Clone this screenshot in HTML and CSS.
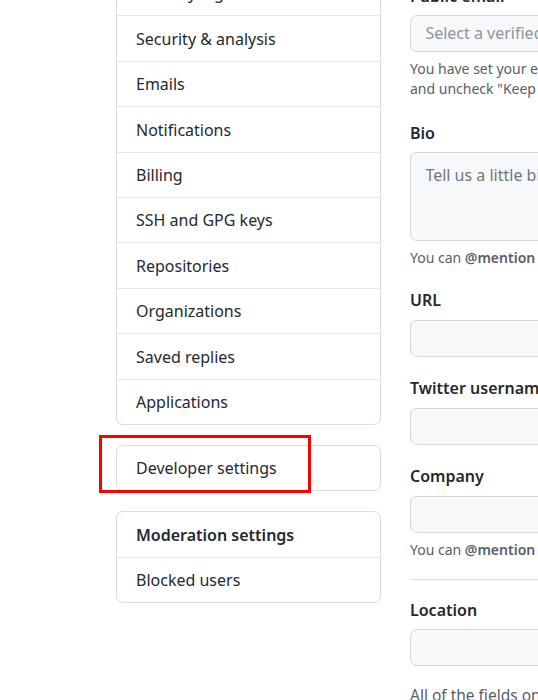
FILE: index.html
```html
<!DOCTYPE html>
<html lang="en">
<head>
<meta charset="utf-8">
<title>Settings</title>
<link rel="stylesheet" href="styles.css">
</head>
<body>
<div class="page">
  <nav class="sidebar">
    <div class="menu">
      <a class="menu-item" href="#">Security log</a>
      <a class="menu-item" href="#">Security &amp; analysis</a>
      <a class="menu-item" href="#">Emails</a>
      <a class="menu-item" href="#">Notifications</a>
      <a class="menu-item" href="#">Billing</a>
      <a class="menu-item" href="#">SSH and GPG keys</a>
      <a class="menu-item" href="#">Repositories</a>
      <a class="menu-item" href="#">Organizations</a>
      <a class="menu-item" href="#">Saved replies</a>
      <a class="menu-item" href="#">Applications</a>
    </div>
    <div class="menu menu-dev">
      <a class="menu-item" href="#">Developer settings</a>
      <span class="highlight"></span>
    </div>
    <div class="menu">
      <div class="menu-heading">Moderation settings</div>
      <a class="menu-item" href="#">Blocked users</a>
    </div>
  </nav>
  <main class="main">
    <div class="group group-first">
      <label class="label">Public email</label>
      <div class="input select"><span class="placeholder">Select a verified email to display</span></div>
      <p class="note">You have set your email address to private. To toggle email privacy, go to email settings<br>and uncheck "Keep my email address private."</p>
    </div>
    <div class="group">
      <label class="label">Bio</label>
      <div class="input textarea"><span class="placeholder">Tell us a little bit about yourself</span></div>
      <p class="note">You can <b>@mention</b> other users and organizations to link to them.</p>
    </div>
    <div class="group">
      <label class="label">URL</label>
      <div class="input"></div>
    </div>
    <div class="group">
      <label class="label">Twitter username</label>
      <div class="input"></div>
    </div>
    <div class="group">
      <label class="label">Company</label>
      <div class="input"></div>
      <p class="note">You can <b>@mention</b> your company's GitHub organization to link it.</p>
    </div>
    <hr class="divider">
    <div class="group">
      <label class="label">Location</label>
      <div class="input"></div>
    </div>
    <p class="note note-lg">All of the fields on this page are optional and can be deleted at any time.</p>
  </main>
</div>
</body>
</html>
```

FILE: styles.css
```css
html, body {
  margin: 0;
  padding: 0;
  background: #ffffff;
  overflow: hidden;
}
body {
  font-family: "Noto Sans", "Open Sans", sans-serif;
  color: #24292f;
  font-size: 16px;
  line-height: 25.2px;
}
.page {
  display: flex;
  align-items: flex-start;
  gap: 29px;
  padding-left: 116px;
  margin-top: -30px;
  width: 1000px;
}
.sidebar {
  width: 265px;
  flex: none;
  display: flex;
  flex-direction: column;
  gap: 20px;
}
.menu {
  border: 1px solid #d8dee4;
  border-radius: 7px;
  display: flex;
  flex-direction: column;
  position: relative;
}
.menu-item, .menu-heading {
  display: block;
  padding: 10.4px 19px 8.8px;
  color: #24292f;
  text-decoration: none;
  border-top: 1px solid #e4e8ec;
}
.menu > :first-child {
  border-top: none;
}
.menu-heading {
  font-weight: 600;
}
.highlight {
  position: absolute;
  left: -18px;
  top: -11px;
  width: 206px;
  height: 52px;
  border: 3px solid #ff0000;
}
.main {
  width: 460px;
  flex: none;
  padding-top: 13px;
}
.group {
  margin-bottom: 19px;
}
.group-first {
  margin-bottom: 21px;
}
.label {
  display: block;
  font-weight: 600;
  padding-top: 0.5px;
  margin-bottom: 6.5px;
}
.input {
  height: 35px;
  border: 1px solid #d0d7de;
  border-radius: 7px;
  background: #f6f8fa;
  padding: 0 14.4px;
  display: flex;
  align-items: center;
}
.textarea {
  align-items: flex-start;
  padding-top: 10px;
  box-sizing: border-box;
  height: 89px;
}
.placeholder {
  color: #6e7781;
  white-space: nowrap;
}
.select .placeholder {
  color: #8c959f;
}
.note {
  margin: 7px 0 0;
  font-size: 14px;
  line-height: 20px;
  color: #57606a;
  white-space: nowrap;
}
.note b {
  font-weight: 600;
}
.divider {
  border: 0;
  border-top: 1px solid #d8dee4;
  margin: 0 0 17px;
}
.note-lg {
  margin-top: 17px;
  font-size: 15.5px;
}
```
